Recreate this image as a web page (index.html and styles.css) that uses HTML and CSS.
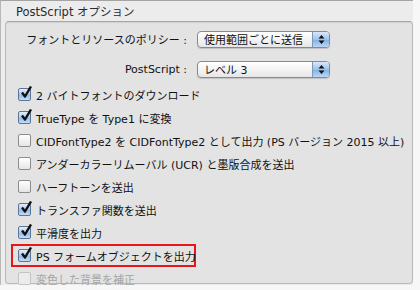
FILE: index.html
```html
<!DOCTYPE html>
<html lang="ja">
<head>
<meta charset="utf-8">
<link rel="stylesheet" href="styles.css">
</head>
<body>
<div class="win">
  <div class="title">PostScript オプション</div>
  <div class="panel">
    <div class="form-row first">
      <span class="label">フォントとリソースのポリシー :</span>
      <span class="popup"><span class="ptext">使用範囲ごとに送信</span><span class="arrows"><svg width="7" height="11" viewBox="0 0 7 11"><path d="M3.5 1 L6.5 4.5 H0.5 Z M3.5 10 L6.5 6.5 H0.5 Z" fill="#111"/></svg></span></span>
    </div>
    <div class="form-row second">
      <span class="label">PostScript :</span>
      <span class="popup"><span class="ptext">レベル 3</span><span class="arrows"><svg width="7" height="11" viewBox="0 0 7 11"><path d="M3.5 1 L6.5 4.5 H0.5 Z M3.5 10 L6.5 6.5 H0.5 Z" fill="#111"/></svg></span></span>
    </div>
    <div class="checks">
      <div class="cb-row"><span class="cb on"><svg viewBox="0 0 14 14"><path d="M3 6.5 L6 10.5 L12 0.5" fill="none" stroke="#111" stroke-width="2.4" stroke-linejoin="round"/></svg></span><span>2 バイトフォントのダウンロード</span></div>
      <div class="cb-row"><span class="cb on"><svg viewBox="0 0 14 14"><path d="M3 6.5 L6 10.5 L12 0.5" fill="none" stroke="#111" stroke-width="2.4" stroke-linejoin="round"/></svg></span><span>TrueType を Type1 に変換</span></div>
      <div class="cb-row"><span class="cb"></span><span>CIDFontType2 を CIDFontType2 として出力 (PS バージョン 2015 以上)</span></div>
      <div class="cb-row"><span class="cb"></span><span>アンダーカラーリムーバル (UCR) と墨版合成を送出</span></div>
      <div class="cb-row"><span class="cb"></span><span>ハーフトーンを送出</span></div>
      <div class="cb-row"><span class="cb on"><svg viewBox="0 0 14 14"><path d="M3 6.5 L6 10.5 L12 0.5" fill="none" stroke="#111" stroke-width="2.4" stroke-linejoin="round"/></svg></span><span>トランスファ関数を送出</span></div>
      <div class="cb-row"><span class="cb on"><svg viewBox="0 0 14 14"><path d="M3 6.5 L6 10.5 L12 0.5" fill="none" stroke="#111" stroke-width="2.4" stroke-linejoin="round"/></svg></span><span>平滑度を出力</span></div>
      <div class="cb-row hl"><span class="cb on"><svg viewBox="0 0 14 14"><path d="M3 6.5 L6 10.5 L12 0.5" fill="none" stroke="#111" stroke-width="2.4" stroke-linejoin="round"/></svg></span><span>PS フォームオブジェクトを出力</span></div>
      <div class="cb-row dis"><span class="cb"></span><span>変色した背景を補正</span></div>
    </div>
  </div>
</div>
</body>
</html>
```
FILE: styles.css
```css
html, body {
  margin: 0;
  padding: 0;
  background: #f7f7f7;
}
body {
  width: 420px;
  height: 290px;
  overflow: hidden;
  font-family: "DejaVu Sans", "Noto Sans CJK JP", sans-serif;
  font-size: 11px;
  color: #111;
}
.win {
  width: 413px;
  height: 285px;
  background: #ececec;
  border-top: 1px solid #a4a4a4;
  border-left: 1px solid #b8b8b8;
  box-sizing: border-box;
  padding-left: 4px;
}
.title {
  height: 20px;
  line-height: 22px;
  padding-left: 11px;
  font-size: 11.5px;
  color: #2a2a2a;
}
.panel {
  width: 408px;
  height: 263px;
  box-sizing: border-box;
  background: #e3e3e3;
  border: 1px solid #b9b9b9;
  border-top-color: #a6a6a6;
  border-radius: 4px;
  box-shadow: inset 0 1px 1px rgba(0,0,0,0.08);
}
.form-row {
  display: flex;
  align-items: center;
  height: 18px;
}
.form-row.first { margin-top: 8px; }
.form-row.second { margin-top: 12px; }
.label {
  width: 181px;
  text-align: right;
  white-space: nowrap;
}
.popup {
  margin-left: 10px;
  width: 133px;
  height: 17px;
  box-sizing: border-box;
  border: 1px solid #8a8a8a;
  border-radius: 4px;
  background: linear-gradient(#ffffff, #f4f4f4 50%, #e6e6e6);
  display: flex;
  align-items: center;
  box-shadow: 0 1px 1px rgba(0,0,0,0.15);
  overflow: hidden;
}
.ptext {
  flex: 1;
  padding-left: 6px;
  white-space: nowrap;
}
.arrows {
  width: 16px;
  height: 100%;
  border-left: 1px solid #7d98bb;
  background: linear-gradient(#d9e8f8, #9ec2ea 50%, #7fb0e6 51%, #b9d7f6);
  display: flex;
  align-items: center;
  justify-content: center;
}
.checks {
  margin-top: 5px;
  display: flex;
  flex-direction: column;
  padding-left: 12px;
}
.cb-row {
  display: flex;
  align-items: center;
  height: 23px;
  white-space: nowrap;
}
.cb {
  width: 13px;
  height: 13px;
  box-sizing: border-box;
  border: 1px solid #8c8c8c;
  border-radius: 2px;
  background: linear-gradient(#ffffff, #f0f0f0 60%, #e4e4e4);
  margin-right: 5px;
  flex: none;
  position: relative;
}
.cb.on {
  border-color: #5d7698;
  background: linear-gradient(#e4effb, #a9c9ee 50%, #8bb7ea 51%, #c4ddf7);
}
.cb svg {
  position: absolute;
  left: 0;
  top: -3px;
  width: 14px;
  height: 14px;
}
.hl {
  margin-left: -7px;
  padding-left: 5px;
  width: 185px;
  box-sizing: border-box;
  border: 2px solid #e8151b;
  height: 23px;
}
.dis { color: #a5a5a5; }
.dis .cb { border-color: #c4c4c4; background: #ececec; }
```
